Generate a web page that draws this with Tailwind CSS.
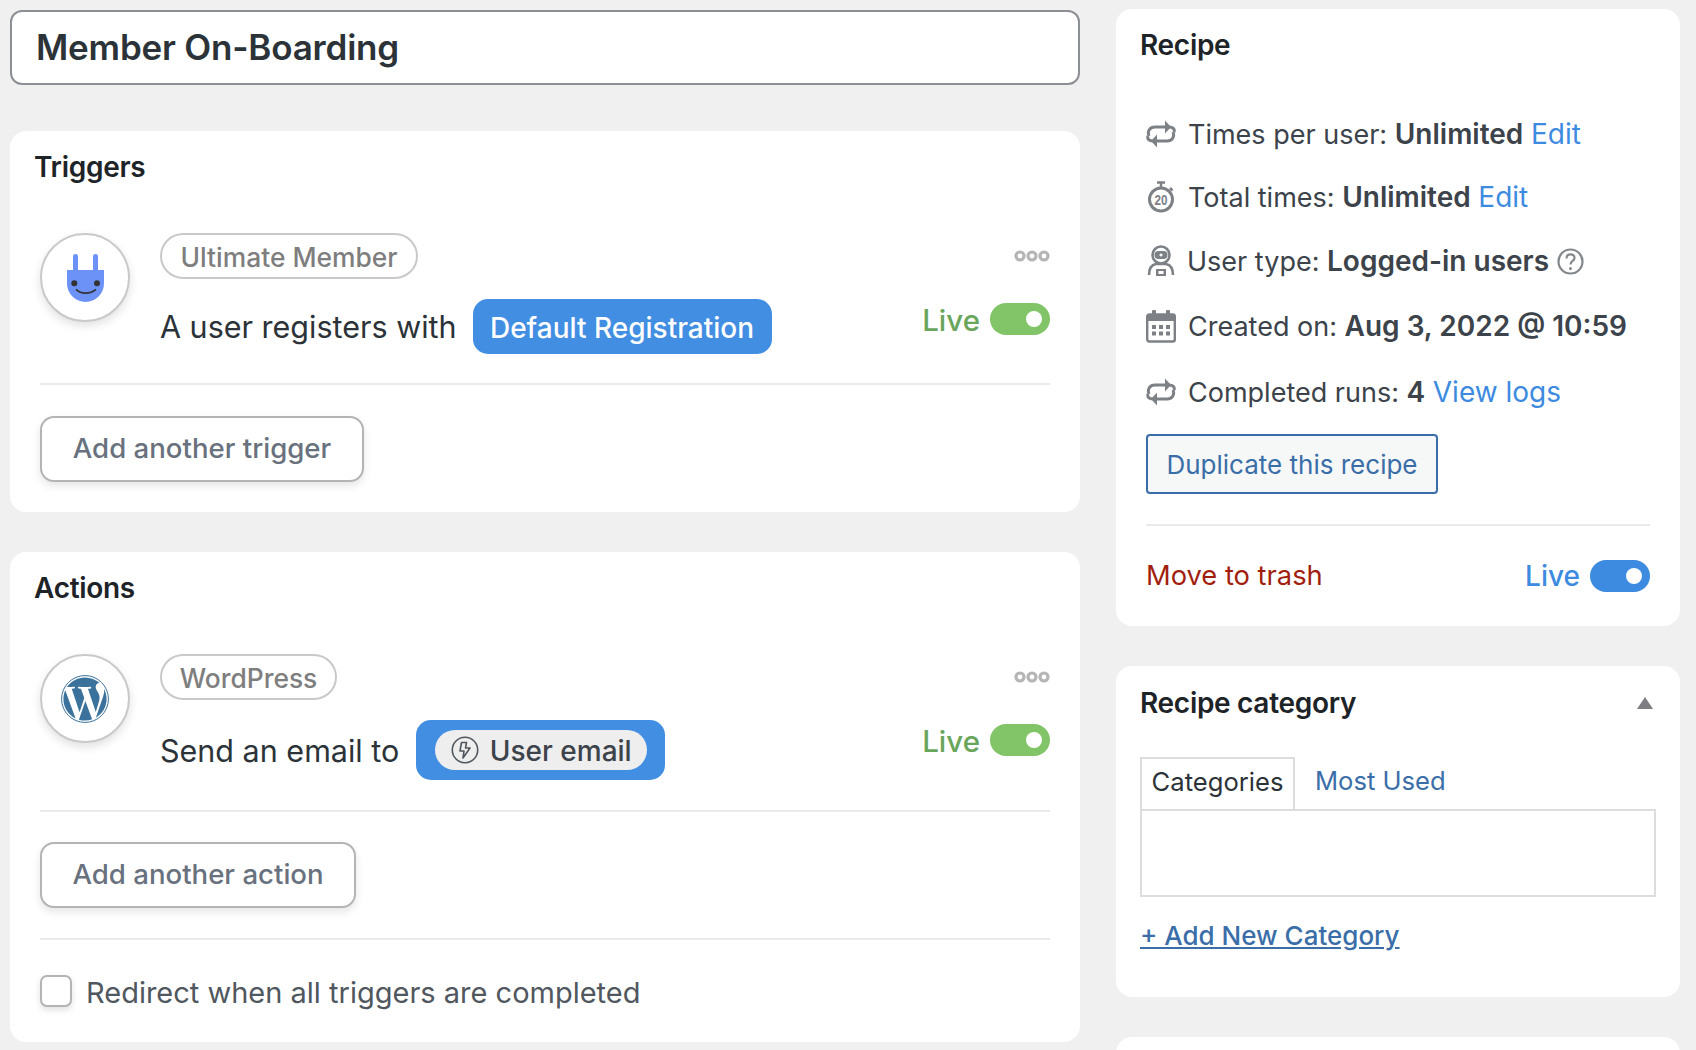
<!DOCTYPE html>
<html lang="en">
<head>
<meta charset="UTF-8" />
<title>Member On-Boarding</title>
<script src="https://cdn.jsdelivr.net/npm/@tailwindcss/browser@4"></script>
</head>
<body class="h-[1050px] overflow-hidden bg-[#f0f0f0] font-['Inter',sans-serif] text-[#3c434a]">
<div class="flex items-start pl-[10px] gap-[36px]">

  <!-- left column -->
  <div class="w-[1070px] shrink-0">
    <div class="mt-[10px] h-[75px] flex items-center rounded-[12px] border-2 border-[#8c8f94] bg-white pl-[24px] text-[35px] font-semibold tracking-[-0.2px] text-[#2c3338]">Member On-Boarding</div>

    <!-- triggers -->
    <section class="mt-[46px] h-[381px] rounded-[16px] bg-white pt-[18px] pl-[24px] pr-[30px]">
      <h2 class="h-[36px] leading-[36px] text-[28px] font-semibold tracking-[-0.3px] text-[#1d2327]">Triggers</h2>
      <div class="ml-[6px] mt-[48px] flex border-b-2 border-[#eaeaea] pb-[29px]">
        <div class="flex h-[89px] w-[90px] shrink-0 items-center justify-center rounded-full border-2 border-[#c9c9c9] bg-white shadow-[0_4px_10px_rgba(0,0,0,0.12)]">
          <svg width="37" height="48" viewBox="0 0 37 48"><path fill="#6c92f8" d="M6 2.500a2.500 2.500 0 0 1 5 0V16h15V2.500a2.500 2.500 0 0 1 5 0V16h6v13.500A18.500 18.500 0 0 1 0 29.500V16h6z"/><circle cx="7.300" cy="29.300" r="3" fill="#333"/><circle cx="30" cy="29.300" r="3" fill="#333"/><path d="M9 35.300c5 5 14 5 20 0" fill="none" stroke="#333" stroke-width="1.700"/></svg>
        </div>
        <div class="ml-[30px] flex-1">
          <div class="flex items-center justify-between">
            <span class="flex h-[46px] w-[258px] items-center justify-center rounded-full border-2 border-[#c9c9c9] pt-[3px] text-[26.400px] font-medium text-[#7e7e7e]">Ultimate Member</span>
            <svg width="36" height="12" viewBox="0 0 36 12" fill="none" stroke="#b5b5b5" stroke-width="3.200"><circle cx="6" cy="6" r="4"/><circle cx="18" cy="6" r="4"/><circle cx="30" cy="6" r="4"/></svg>
          </div>
          <div class="mt-[20px] flex items-start justify-between">
            <div class="flex items-center">
              <span class="pt-[1px] text-[30.500px] text-[#2c3338]">A user registers with</span>
              <span class="ml-[16px] flex h-[55px] w-[299px] items-center justify-center rounded-[15px] bg-[#418ee3] pt-[2px] text-[28px] font-medium text-white">Default Registration</span>
            </div>
            <div class="mt-[4px] flex h-[32px] items-center gap-[10px]">
              <span class="pt-[3px] text-[29.500px] font-medium text-[#69a55b]">Live</span>
              <span class="flex h-[32px] w-[60px] items-center justify-end rounded-full bg-[#82c468] pr-[8px]"><span class="h-[16px] w-[16px] rounded-full bg-white"></span></span>
            </div>
          </div>
        </div>
      </div>
      <button class="ml-[6px] mt-[31px] h-[66px] w-[324px] rounded-[14px] border-2 border-[#b4b4b4] bg-white text-[27.600px] font-medium text-[#68717d] shadow-[0_4px_8px_rgba(0,0,0,0.1)]">Add another trigger</button>
    </section>

    <!-- actions -->
    <section class="mt-[40px] h-[490px] rounded-[16px] bg-white pt-[18px] pl-[24px] pr-[30px]">
      <h2 class="h-[36px] leading-[36px] text-[28px] font-semibold tracking-[-0.3px] text-[#1d2327]">Actions</h2>
      <div class="ml-[6px] mt-[48px] flex border-b-2 border-[#eaeaea] pb-[30px]">
        <div class="flex h-[89px] w-[90px] shrink-0 items-center justify-center rounded-full border-2 border-[#c9c9c9] bg-white shadow-[0_4px_10px_rgba(0,0,0,0.12)]">
          <svg width="48" height="48" viewBox="0 0 24 24" fill="#3b729c"><path d="M21.469 6.825c.84 1.537 1.318 3.3 1.318 5.175 0 3.979-2.156 7.456-5.363 9.325l3.295-9.527c.615-1.54.82-2.771.82-3.864 0-.405-.026-.78-.07-1.11m-7.981.105c.647-.03 1.232-.105 1.232-.105.582-.075.514-.93-.067-.899 0 0-1.755.135-2.88.135-1.064 0-2.85-.15-2.85-.15-.585-.03-.661.855-.075.885 0 0 .54.061 1.125.09l1.68 4.605-2.37 7.08L5.354 6.9c.649-.03 1.234-.1 1.234-.1.585-.075.516-.93-.065-.896 0 0-1.746.138-2.874.138-.2 0-.438-.008-.69-.015C4.911 3.15 8.235 1.215 12 1.215c2.809 0 5.365 1.072 7.286 2.833-.046-.003-.091-.009-.141-.009-1.06 0-1.812.923-1.812 1.914 0 .89.513 1.643 1.06 2.531.411.72.89 1.643.89 2.977 0 .915-.354 1.994-.821 3.479l-1.075 3.585-3.9-11.61.001.014zM12 22.784c-1.059 0-2.081-.153-3.048-.437l3.237-9.406 3.315 9.087c.024.053.05.101.078.149-1.12.393-2.325.609-3.582.609M1.211 12c0-1.564.336-3.05.935-4.39L7.29 21.709C3.694 19.96 1.212 16.271 1.211 12"/><circle cx="12" cy="12" r="11.700" fill="none" stroke="#3b729c" stroke-width="0.500"/></svg>
        </div>
        <div class="ml-[30px] flex-1">
          <div class="flex items-center justify-between">
            <span class="flex h-[46px] w-[177px] items-center justify-center rounded-full border-2 border-[#c9c9c9] pt-[3px] text-[26.400px] font-medium text-[#7e7e7e]">WordPress</span>
            <svg width="36" height="12" viewBox="0 0 36 12" fill="none" stroke="#b5b5b5" stroke-width="3.200"><circle cx="6" cy="6" r="4"/><circle cx="18" cy="6" r="4"/><circle cx="30" cy="6" r="4"/></svg>
          </div>
          <div class="mt-[20px] flex items-start justify-between">
            <div class="flex items-center">
              <span class="pt-[2px] text-[30.500px] text-[#2c3338]">Send an email to</span>
              <span class="ml-[17px] flex h-[60px] w-[249px] items-center justify-center rounded-[15px] bg-[#418ee3]">
                <span class="flex h-[40px] w-[212px] items-center gap-[11px] rounded-full bg-[#eeeeee] pl-[16px] text-[28px] font-medium text-[#3c434a]">
                  <svg width="28" height="28" viewBox="0 0 28 28" fill="none" stroke="#50575e" stroke-width="1.600" stroke-linejoin="round"><circle cx="14" cy="14" r="12.700"/><path d="M15.500 6.500H10.500L9 15h4l-1 7 7-10h-4.500z"/></svg>
                  <span class="pt-[2px]">User email</span>
                </span>
              </span>
            </div>
            <div class="mt-[4px] flex h-[32px] items-center gap-[10px]">
              <span class="pt-[3px] text-[29.500px] font-medium text-[#69a55b]">Live</span>
              <span class="flex h-[32px] w-[60px] items-center justify-end rounded-full bg-[#82c468] pr-[8px]"><span class="h-[16px] w-[16px] rounded-full bg-white"></span></span>
            </div>
          </div>
        </div>
      </div>
      <div class="ml-[6px] border-b-2 border-[#eaeaea] pt-[30px] pb-[30px]">
        <button class="block h-[66px] w-[316px] rounded-[14px] border-2 border-[#b4b4b4] bg-white text-[27.600px] font-medium text-[#68717d] shadow-[0_4px_8px_rgba(0,0,0,0.1)]">Add another action</button>
      </div>
      <label class="ml-[6px] mt-[28px] flex items-center">
        <span class="h-[32px] w-[32px] rounded-[7px] border-2 border-[#b4b4b4] bg-white shadow-[0_3px_6px_rgba(0,0,0,0.12)]"></span>
        <span class="ml-[14px] pt-[3px] text-[29px] text-[#50575e]">Redirect when all triggers are completed</span>
      </label>
    </section>
  </div>

  <!-- right column -->
  <div class="w-[564px] shrink-0">
    <section class="mt-[9px] h-[617px] rounded-[16px] bg-white pl-[24px] pr-[30px] pt-[18px]">
      <h2 class="h-[36px] leading-[36px] text-[28px] font-semibold tracking-[-0.3px] text-[#1d2327]">Recipe</h2>
      <div class="ml-[6px] mt-[51px] flex h-[40px] items-center text-[27px]">
        <svg class="mr-[12px] shrink-0" width="30" height="30" viewBox="0 0 30 30" fill="none" stroke="#7d8186" stroke-width="3"><path d="M3 17c-2-5 1-9 6-9h14c4 0 6 2 5 5"/><path d="M27 13c2 5-1 9-6 9H7c-4 0-6-2-5-5" /><path d="M19 1.500l6 6.500-6 6.500" fill="#7d8186" stroke="none"/><path d="M11 15.500l-6 6.500 6 6.500" fill="#7d8186" stroke="none"/></svg>
        <span>Times per user:&nbsp;<b class="text-[28px] font-semibold">Unlimited</b>&nbsp;<a class="text-[28px] text-[#3d8be0]">Edit</a></span>
      </div>
      <div class="ml-[6px] mt-[23px] flex h-[40px] items-center text-[27px]">
        <svg class="mr-[12px] ml-[1px] shrink-0" width="29" height="32" viewBox="0 0 29 32" fill="none" stroke="#7d8186"><circle cx="14" cy="18.500" r="11.500" stroke-width="3"/><path d="M10 1.500h8M14 1.500v5M23 7l2.500 2.500" stroke-width="2.500"/><text x="14" y="24" text-anchor="middle" font-family="Liberation Sans" font-size="15" font-weight="700" fill="#7d8186" stroke="none" textLength="13" lengthAdjust="spacingAndGlyphs">20</text></svg>
        <span>Total times:&nbsp;<b class="text-[28px] font-semibold">Unlimited</b>&nbsp;<a class="text-[28px] text-[#3d8be0]">Edit</a></span>
      </div>
      <div class="ml-[6px] mt-[24px] flex h-[40px] items-center text-[27px]">
        <svg class="mr-[12px] ml-[1px] shrink-0" width="28" height="32" viewBox="0 0 28 32" fill="none" stroke="#7d8186" stroke-width="2.600"><circle cx="14" cy="10" r="8.500"/><rect x="7.500" y="6" width="13" height="8" rx="4" fill="#7d8186" stroke="none"/><path d="M14 8.500v3M12.500 10h3" stroke="#fff" stroke-width="1.300"/><path d="M2 30c0-6 2-10 7-11h10c5 1 7 5 7 11"/><rect x="9" y="24" width="10" height="7" fill="#7d8186" stroke="none"/><rect x="11.500" y="26" width="5" height="3" fill="#fff" stroke="none"/></svg>
        <span>User type:&nbsp;<b class="text-[28px] font-semibold">Logged-in users</b></span>
        <svg class="ml-[8px] shrink-0" width="27" height="27" viewBox="0 0 27 27" fill="none" stroke="#83878c" stroke-width="2.200"><circle cx="13.500" cy="13.500" r="12"/><path d="M9.500 10.500c0-5.500 8-5.500 8-.5 0 3-4 3-4 6.500" /><circle cx="13.500" cy="20.500" r="1.500" fill="#83878c" stroke="none"/></svg>
      </div>
      <div class="ml-[6px] mt-[25px] flex h-[40px] items-center text-[27px]">
        <svg class="mr-[12px] shrink-0" width="30" height="33" viewBox="0 0 30 33" fill="none"><rect x="1.200" y="4.500" width="27.600" height="27" rx="2" stroke="#7d8186" stroke-width="2.400"/><rect x="1" y="4" width="28" height="7" fill="#7d8186"/><rect x="6" y="0" width="4" height="7" rx="1" fill="#7d8186"/><rect x="20" y="0" width="4" height="7" rx="1" fill="#7d8186"/><g fill="#7d8186"><rect x="6" y="15" width="4" height="4"/><rect x="13" y="15" width="4" height="4"/><rect x="20" y="15" width="4" height="4"/><rect x="6" y="21.500" width="4" height="4"/><rect x="13" y="21.500" width="4" height="4"/><rect x="20" y="21.500" width="4" height="4"/></g></svg>
        <span>Created on:&nbsp;<b class="text-[28px] font-semibold">Aug 3, 2022 @ 10:59</b></span>
      </div>
      <div class="ml-[6px] mt-[26px] flex h-[40px] items-center text-[27px]">
        <svg class="mr-[12px] shrink-0" width="30" height="30" viewBox="0 0 30 30" fill="none" stroke="#7d8186" stroke-width="3"><path d="M3 17c-2-5 1-9 6-9h14c4 0 6 2 5 5"/><path d="M27 13c2 5-1 9-6 9H7c-4 0-6-2-5-5" /><path d="M19 1.500l6 6.500-6 6.500" fill="#7d8186" stroke="none"/><path d="M11 15.500l-6 6.500 6 6.500" fill="#7d8186" stroke="none"/></svg>
        <span>Completed runs:&nbsp;<b class="text-[28px] font-semibold">4</b>&nbsp;<a class="text-[28px] text-[#3d8be0]">View logs</a></span>
      </div>
      <button class="ml-[6px] mt-[22px] block h-[60px] w-[292px] rounded-[4px] border-2 border-[#3a6ea8] bg-[#f6f7f7] text-[26px] text-[#3a6ea8]">Duplicate this recipe</button>
      <div class="ml-[6px] mt-[30px] h-[2px] bg-[#eaeaea]"></div>
      <div class="ml-[6px] mt-[29px] flex h-[42px] items-center justify-between">
        <a class="pt-[1px] text-[27.300px] text-[#a11e0d]">Move to trash</a>
        <div class="flex items-center gap-[10px]">
          <span class="text-[28px] font-medium text-[#3d8be0]">Live</span>
          <span class="flex h-[32px] w-[60px] items-center justify-end rounded-full bg-[#3d8be0] pr-[8px]"><span class="h-[16px] w-[16px] rounded-full bg-white"></span></span>
        </div>
      </div>
    </section>

    <section class="mt-[40px] h-[331px] rounded-[16px] bg-white pl-[24px] pr-[24px] pt-[19px]">
      <div class="flex items-center justify-between pr-[3px]">
        <h2 class="h-[36px] leading-[36px] text-[28px] font-semibold tracking-[-0.3px] text-[#1d2327]">Recipe category</h2>
        <span class="h-0 w-0 border-x-[8px] border-b-[12px] border-x-transparent border-b-[#7d7d82]"></span>
      </div>
      <div class="mt-[36px] flex h-[52px] items-center">
        <span class="flex h-full w-[155px] items-center justify-center border-x-2 border-t-2 border-[#dddddd] pb-[4px] text-[25.600px] text-[#2c3338]">Categories</span>
        <a class="ml-[20px] pb-[4px] text-[25.600px] text-[#3a6ea8]">Most Used</a>
      </div>
      <div class="h-[88px] border-2 border-[#dddddd]"></div>
      <a class="mt-[19px] block text-[26px] font-medium text-[#3a6ea8] underline">+ Add New Category</a>
    </section>

    <section class="mt-[40px] h-[100px] rounded-[16px] bg-white"></section>
  </div>
</div>
</body>
</html>
